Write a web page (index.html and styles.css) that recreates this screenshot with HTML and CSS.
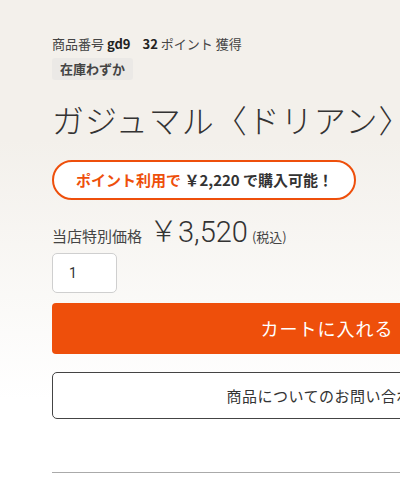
FILE: index.html
```html
<!DOCTYPE html>
<html lang="ja">
<head>
<meta charset="utf-8">
<link rel="stylesheet" href="styles.css">
</head>
<body>
<div class="product">
  <div class="meta">
    <span class="code">商品番号 <b>gd9</b></span>
    <span class="points"><b>32</b> ポイント 獲得</span>
  </div>
  <div class="stock">在庫わずか</div>
  <h1 class="title">ガジュマル〈ドリアン〉</h1>
  <div class="point-badge"><span class="accent">ポイント利用で</span>&nbsp;￥2,220 で購入可能！</div>
  <div class="price-row">
    <span class="price-label">当店特別価格</span>
    <span class="price">￥3,520</span>
    <span class="tax">(税込)</span>
  </div>
  <div class="qty">1</div>
  <div class="btn-cart">カートに入れる</div>
  <div class="btn-inquiry">商品についてのお問い合わせ</div>
  <hr class="divider">
</div>
</body>
</html>
```

FILE: styles.css
```css
html {
  overflow: hidden;
}
body {
  margin: 0;
  min-height: 490px;
  background: linear-gradient(#f3f0eb 0, #f3f0eb 140px, #ffffff 400px);
  font-family: "Noto Sans CJK JP", "Noto Sans", sans-serif;
  color: #333;
}
.product {
  width: 550px;
  padding: 34px 0 0 52px;
  display: flex;
  flex-direction: column;
  align-items: flex-start;
}
.meta {
  font-size: 13px;
  line-height: 20px;
  display: flex;
  gap: 12px;
  color: #444;
}
.meta b {
  color: #222;
}
.stock {
  margin-top: 4px;
  background: #ebe9e6;
  font-size: 13px;
  font-weight: bold;
  line-height: 22px;
  padding: 0 8px;
  border-radius: 3px;
  color: #444;
}
.title {
  margin: 17px 0 0;
  font-size: 32px;
  font-weight: 300;
  line-height: 45px;
  letter-spacing: 1px;
  color: #333;
  white-space: nowrap;
}
.point-badge {
  margin-top: 18px;
  height: 36px;
  line-height: 36px;
  padding: 0 21px 0 22px;
  border: 2px solid #ee4f0b;
  border-radius: 20px;
  background: #fff;
  font-size: 15px;
  font-weight: bold;
  color: #333;
  white-space: nowrap;
}
.accent {
  color: #ee4f0b;
}
.price-row {
  margin-top: 8px;
  display: flex;
  align-items: baseline;
  height: 40px;
  white-space: nowrap;
}
.price-label {
  font-size: 15px;
  color: #444;
}
.price {
  font-family: "Roboto", "Noto Sans CJK JP", sans-serif;
  font-weight: 300;
  font-size: 29px;
  margin-left: 7px;
  color: #333;
}
.tax {
  font-size: 13px;
  margin-left: 4px;
  color: #444;
}
.qty {
  margin-top: 5px;
  box-sizing: border-box;
  width: 65px;
  height: 40px;
  border: 1px solid #cfcfcf;
  border-radius: 5px;
  background: #fff;
  font-family: "Roboto", sans-serif;
  font-size: 14px;
  line-height: 38px;
  padding-left: 16px;
  color: #333;
}
.btn-cart {
  margin-top: 10px;
  box-sizing: border-box;
  width: 550px;
  height: 51px;
  line-height: 51px;
  background: #ee4f0b;
  border-radius: 4px;
  color: #fff;
  font-size: 18px;
  letter-spacing: 1px;
  text-align: center;
}
.btn-inquiry {
  margin-top: 18px;
  box-sizing: border-box;
  width: 550px;
  height: 47px;
  line-height: 45px;
  border: 1px solid #444;
  border-radius: 5px;
  background: #fff;
  color: #333;
  font-size: 15px;
  letter-spacing: 0.5px;
  text-align: center;
}
.divider {
  margin: 53px 0 0;
  width: 550px;
  border: 0;
  border-top: 1px solid #aaa;
  height: 0;
}
```
